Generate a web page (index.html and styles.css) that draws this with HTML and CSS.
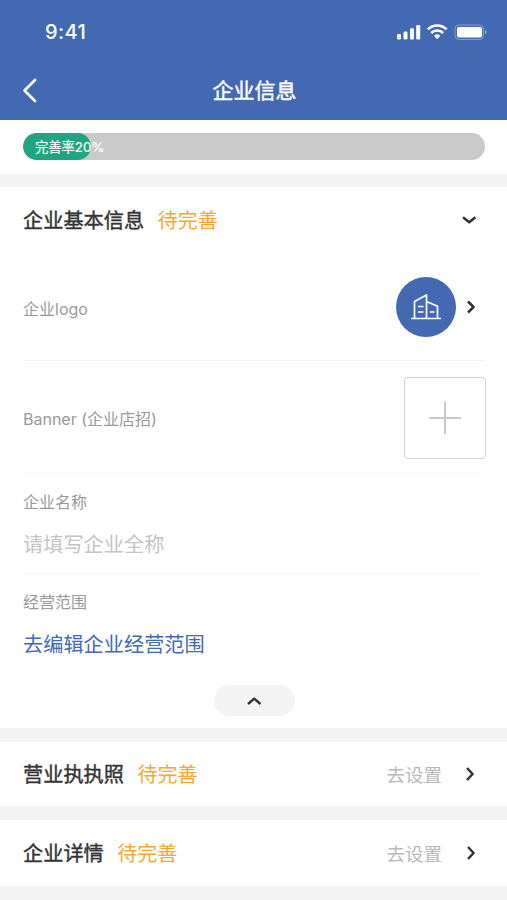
FILE: index.html
```html
<!DOCTYPE html>
<html lang="zh-CN">
<head>
<meta charset="utf-8">
<title>企业信息</title>
<link rel="stylesheet" href="styles.css">
</head>
<body>
<header class="header">
  <div class="status-bar">
    <span class="time">9:41</span>
    <svg class="status-icons" width="92" height="18" viewBox="0 0 92 18" fill="#fff">
      <rect x="1" y="11" width="4" height="5.5" rx="1.2"/>
      <rect x="7.5" y="8.5" width="4" height="8" rx="1.2"/>
      <rect x="14" y="5.3" width="4" height="11.2" rx="1.2"/>
      <rect x="20.2" y="2" width="4" height="14.5" rx="1.2"/>
      <g fill="none" stroke="#fff" stroke-width="2.5">
        <path d="M31.8 6.4a13.3 13.3 0 0 1 18.8 0"/>
        <path d="M35.2 10a8.6 8.6 0 0 1 12 0"/>
      </g>
      <path d="M38.1 12.8a4.5 4.5 0 0 1 6.2 0L41.2 16.3z"/>
      <rect x="59" y="2" width="28.5" height="14.5" rx="4" fill="none" stroke="#fff" stroke-opacity=".35"/>
      <rect x="61" y="4" width="25" height="10.5" rx="2"/>
      <path d="M89 6.8c2.2.8 2.2 4 0 4.8z" opacity=".4"/>
    </svg>
  </div>
  <div class="nav-bar">
    <svg class="back" width="16" height="26" viewBox="0 0 16 26"><path d="M13 2 2.5 12.5 13 23"/></svg>
    <h1 class="nav-title">企业信息</h1>
  </div>
</header>
<main>
  <section class="progress-panel">
    <div class="progress">
      <div class="progress-fill"></div>
      <span class="progress-label">完善率20%</span>
    </div>
  </section>
  <section class="panel">
    <div class="panel-head">
      <h2 class="title">企业基本信息</h2><span class="state">待完善</span>
      <svg class="chevron down" width="16" height="16" viewBox="0 0 16 16"><path d="M2 5.2 8.2 10.3 14.4 5.2"/></svg>
    </div>
    <div class="field logo-field">
      <span class="label">企业logo</span>
      <div class="logo">
        <svg width="30" height="30" viewBox="0 0 30 30"><path d="M0 26.5H30M3.5 26.5V9.5L15.5 3V26.5M15.5 9.5 26.5 14.3V26.5M7 14.5H12.5M7 20H12.5M18.8 20H23.5"/></svg>
      </div>
      <svg class="chevron" width="12" height="16" viewBox="0 0 12 16"><path d="M3 2.5 8.6 8 3 13.5"/></svg>
    </div>
    <div class="field banner-field">
      <span class="label">Banner (企业店招)</span>
      <div class="upload"><svg width="34" height="34" viewBox="0 0 34 34"><path d="M17 1V33M1 17H33"/></svg></div>
    </div>
    <div class="field text-field">
      <span class="label">企业名称</span>
      <span class="placeholder">请填写企业全称</span>
    </div>
    <div class="field text-field scope-field">
      <span class="label">经营范围</span>
      <a class="edit-link">去编辑企业经营范围</a>
    </div>
    <div class="collapse"><svg class="chevron" width="16" height="16" viewBox="0 0 16 16"><path d="M2 11 8.2 5.6 14.4 11"/></svg></div>
  </section>
  <section class="row license">
    <h2 class="title">营业执执照</h2><span class="state">待完善</span>
    <span class="action">去设置</span>
    <svg class="chevron" width="12" height="16" viewBox="0 0 12 16"><path d="M3 2 8.6 8 3 14"/></svg>
  </section>
  <section class="row details">
    <h2 class="title">企业详情</h2><span class="state">待完善</span>
    <span class="action">去设置</span>
    <svg class="chevron" width="12" height="16" viewBox="0 0 12 16"><path d="M3 2 8.6 8 3 14"/></svg>
  </section>
</main>
</body>
</html>
```
FILE: styles.css
```css
* { box-sizing: border-box; }
body {
  margin: 0;
  height: 900px;
  overflow: hidden;
  background: #f4f4f4;
  color: #333;
  font-family: Inter, "Noto Sans CJK SC", sans-serif;
}
h1, h2 { margin: 0; font-weight: 400; }
svg { display: block; flex: none; }
.header { height: 119.5px; background: #4369b2; color: #fff; }
.status-bar {
  height: 62px;
  padding: 1px 19px 0 45px;
  display: flex;
  align-items: center;
  justify-content: space-between;
}
.time { font-size: 20px; font-weight: 500; line-height: 24px; letter-spacing: .4px; }
.nav-bar {
  height: 57px;
  padding: 0 20px 0 22px;
  display: grid;
  grid-template-columns: 16px 1fr 16px;
  align-items: center;
}
.back { fill: none; stroke: #fff; stroke-width: 2.7; stroke-linecap: round; stroke-linejoin: round; }
.nav-title { font-size: 21px; line-height: 30px; text-align: center; -webkit-text-stroke: .4px; }
.progress-panel { height: 54px; padding: 13.5px 22px 0 23px; background: #fff; }
.progress { height: 27px; border-radius: 14px; background: #c9c9c9; display: grid; align-items: center; overflow: hidden; }
.progress-fill { grid-area: 1 / 1; width: 68px; height: 27px; border-radius: 14px; background: #1da681; }
.progress-label { grid-area: 1 / 1; padding-left: 12px; color: #fff; font-size: 13.4px; line-height: 20px; letter-spacing: -.1px; position: relative; -webkit-text-stroke: .2px; }
.panel { margin-top: 13.5px; height: 541px; padding: 0 22px 0 23px; background: #fff; }
.panel-head { height: 65px; display: flex; align-items: center; }
.title { padding-top: 2px; font-size: 20.2px; line-height: 28px; -webkit-text-stroke: .4px; }
.state { padding-top: 2px; margin-left: 13.5px; font-size: 20px; line-height: 28px; color: #f5a832; }
.chevron { fill: none; stroke: #333; stroke-width: 2.5; stroke-linejoin: round; }
.down { margin-left: auto; margin-right: 8px; }
.field { border-bottom: 1px solid #f8f8f8; }
.label { font-size: 16px; line-height: 24px; color: #999; }
.logo-field { height: 109px; padding-top: 1px; display: flex; align-items: center; border-color: #f3f3f3; }
.logo-field .label { padding-top: 5px; }
.logo {
  margin-left: auto;
  margin-right: 9px;
  width: 60px;
  height: 60px;
  border-radius: 50%;
  background: #4369b2;
  display: grid;
  place-items: center;
}
.logo svg { fill: none; stroke: #fff; stroke-width: 1.7; stroke-linejoin: round; }
.logo-field .chevron { margin-right: 8px; }
.banner-field { height: 113px; padding-top: 1px; display: flex; align-items: center; justify-content: space-between; }
.banner-field .label { padding-top: 2px; }
.upload { width: 82px; height: 82px; margin-right: -1px; border: 1px solid #d1d1d1; border-radius: 4px; display: grid; place-items: center; }
.upload svg { fill: none; stroke: #c8c8c8; stroke-width: 2; }
.text-field { height: 100px; padding-top: 16px; display: flex; flex-direction: column; }
.placeholder, .edit-link { margin-top: 15px; font-size: 20.2px; line-height: 32px; }
.placeholder { color: #c4c4c4; }
.edit-link { color: #4369b2; }
.scope-field { height: 111px; border-bottom: 0; }
.collapse { width: 81px; height: 31px; margin: 0 auto; border-radius: 16px; background: #f4f4f4; display: grid; place-items: center; }
.row { padding: 0 26px 0 23px; display: flex; align-items: center; background: #fff; }
.license { margin-top: 14px; height: 64px; }
.details { margin-top: 14px; height: 66px; padding-right: 25px; }
.action { padding-top: 2px; margin-left: auto; margin-right: 22px; font-size: 18.5px; line-height: 28px; color: #b9b9b9; }
.details .action { margin-right: 23px; }
.row .chevron { margin-right: 5px; }
```
